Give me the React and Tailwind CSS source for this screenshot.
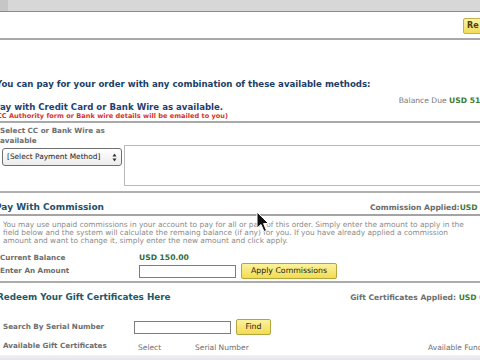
import React from 'react';

const Arrows = () => (
  <svg width="5" height="9" viewBox="0 0 5 9" className="shrink-0">
    <path d="M2.5 0.5 L4.5 3.5 L0.5 3.5 Z" fill="#333" />
    <path d="M2.5 8.5 L4.5 5.5 L0.5 5.5 Z" fill="#333" />
  </svg>
);

const Cursor = () => (
  <svg width="14" height="22" viewBox="0 0 14 22" className="absolute left-[256px] top-[211px]">
    <path d="M1 1 L1 17 L5 13.5 L8 20.5 L10.5 19.5 L7.6 12.6 L12.6 12.6 Z" fill="#111" stroke="#fff" strokeWidth="1" />
  </svg>
);

const App = () => {
  return (
    <div className="relative w-[480px] h-[360px] overflow-hidden bg-white font-['DejaVu_Sans',Verdana,sans-serif]">
      {/* browser chrome strip */}
      <div className="h-[12px] flex bg-[#d7d7d7] border-b border-[#8c8c8c]">
        <div className="w-[8px] bg-[#c6c6c6]" />
      </div>
      <div className="h-[28px] flex items-center justify-end border-b-2 border-[#a8a8a8] overflow-hidden">
        <button className="h-[16px] w-[40px] -mr-[23px] mt-[1px] bg-gradient-to-b from-[#fbf3a6] to-[#f0dc55] border border-[#c2b04a] rounded-[2px] text-[8px] font-bold text-[#4a3d10] text-left pl-[3px] leading-none">
          Re
        </button>
      </div>

      <div className="h-[38px]" />

      {/* intro */}
      <div className="h-[12px] flex items-center -ml-[4px] whitespace-nowrap text-[8.6px] font-bold text-[#203e66]">
        You can pay for your order with any combination of these available methods:
      </div>

      {/* credit card / bank wire */}
      <div className="h-[33px] flex justify-between border-b-2 border-[#a9a9a9] whitespace-nowrap">
        <div className="-ml-[6px] pt-[12px] flex flex-col">
          <span className="text-[8.6px] leading-[10px] font-bold text-[#1f4070]">Pay with Credit Card or Bank Wire as available.</span>
          <span className="text-[6.6px] leading-[8px] font-bold text-[#d8352c]">(CC Authority form or Bank wire details will be emailed to you)</span>
        </div>
        <div className="pt-[6px] -mr-[19px] text-[7.6px] leading-[10px] text-[#777]">
          Balance Due <span className="font-bold text-[#3d7a32]">USD 515.00</span>
        </div>
      </div>

      <div className="flex">
        <div className="w-[124px] pt-[3px]">
          <div className="text-[7.2px] leading-[10px] font-bold text-[#6e6e6e] w-[112px]">
            Select CC or Bank Wire as available
          </div>
          <div className="mt-[2px] ml-[2px] h-[18px] w-[120px] flex items-center justify-between px-[4px] border border-[#6f6f6f] rounded-[3px] bg-gradient-to-b from-white to-[#ececec] text-[7.4px] text-[#222] whitespace-nowrap">
            <span>[Select Payment Method]</span>
            <Arrows />
          </div>
        </div>
        <div className="flex-1 mt-[22px] h-[41px] border border-[#b9b9b9] -mr-[2px]" />
      </div>

      <div className="h-[7px] border-b-2 border-[#b0b0b0]" />

      {/* commission */}
      <div className="h-[23px] flex items-end justify-between pb-[1px] border-b-2 border-[#a4a4a4] whitespace-nowrap">
        <span className="-ml-[5px] text-[9px] leading-[11px] font-bold text-[#21506c]">Pay With Commission</span>
        <span className="-mr-[19px] text-[7.6px] leading-[11px] font-bold text-[#6a6a6a]">
          Commission Applied:<span className="text-[#3d7a32]">USD 0.00</span>
        </span>
      </div>

      <div className="pl-[3px] pt-[5px] text-[7.4px] leading-[8px] text-[#8a8a8a] whitespace-nowrap">
        <div>You may use unpaid commissions in your account to pay for all or part of this order. Simply enter the amount to apply in the</div>
        <div>field below and the system will calculate the remaing balance (if any) for you. If you have already applied a commission</div>
        <div>amount and want to change it, simply enter the new amount and click apply.</div>
      </div>

      <div className="h-[10px] mt-[8px] flex items-center text-[7.2px] font-bold whitespace-nowrap">
        <span className="w-[139px] text-[#6e6e6e]">Current Balance</span>
        <span className="text-[7.6px] text-[#2f6b3a]">USD 150.00</span>
      </div>

      <div className="h-[16px] flex items-center text-[7.2px] whitespace-nowrap">
        <span className="w-[139px] font-bold text-[#6e6e6e]">Enter An Amount</span>
        <div className="w-[97px] h-[13px] border border-[#7d7d7d] bg-white" />
        <button className="ml-[5px] h-[16px] w-[96px] bg-gradient-to-b from-[#fbf29c] to-[#f2dc4e] border border-[#b6a43c] rounded-[2px] text-[7.8px] text-[#2b2410] leading-none">
          Apply Commissions
        </button>
      </div>

      <div className="h-[4px] border-b-2 border-[#ababab]" />

      {/* gift certificates */}
      <div className="h-[30px] flex items-center justify-between whitespace-nowrap">
        <span className="-ml-[3px] text-[8.8px] font-bold text-[#1f5966]">Redeem Your Gift Certificates Here</span>
        <span className="-mr-[18px] text-[7.6px] font-bold text-[#6e6e6e]">
          Gift Certificates Applied: <span className="text-[#3d7a32]">USD 0.00</span>
        </span>
      </div>

      <div className="h-[16px] mt-[6px] flex items-center text-[7.2px] whitespace-nowrap">
        <span className="w-[134px] pl-[3px] font-bold text-[#6e6e6e]">Search By Serial Number</span>
        <div className="w-[97px] h-[13px] border border-[#7d7d7d] bg-white" />
        <button className="ml-[5px] h-[16px] w-[35px] bg-gradient-to-b from-[#fbf29c] to-[#f2dc4e] border border-[#b6a43c] rounded-[2px] text-[7.8px] text-[#2b2410] leading-none">
          Find
        </button>
      </div>

      <div className="h-[12px] mt-[5px] flex items-center text-[7.5px] whitespace-nowrap text-[#6e6e6e]">
        <span className="shrink-0 w-[138px] pl-[3px] font-bold text-[7.2px]">Available Gift Certificates</span>
        <span className="shrink-0 w-[57px] pt-[3px]">Select</span>
        <span className="shrink-0 w-[233px] pt-[3px]">Serial Number</span>
        <span className="shrink-0 pt-[3px]">Available Funds</span>
      </div>

      <div className="h-[8px] mt-[3px] bg-gradient-to-b from-[#f0f1f4] to-[#dcdfe6]" />

      <Cursor />
    </div>
  );
};

export default App;
